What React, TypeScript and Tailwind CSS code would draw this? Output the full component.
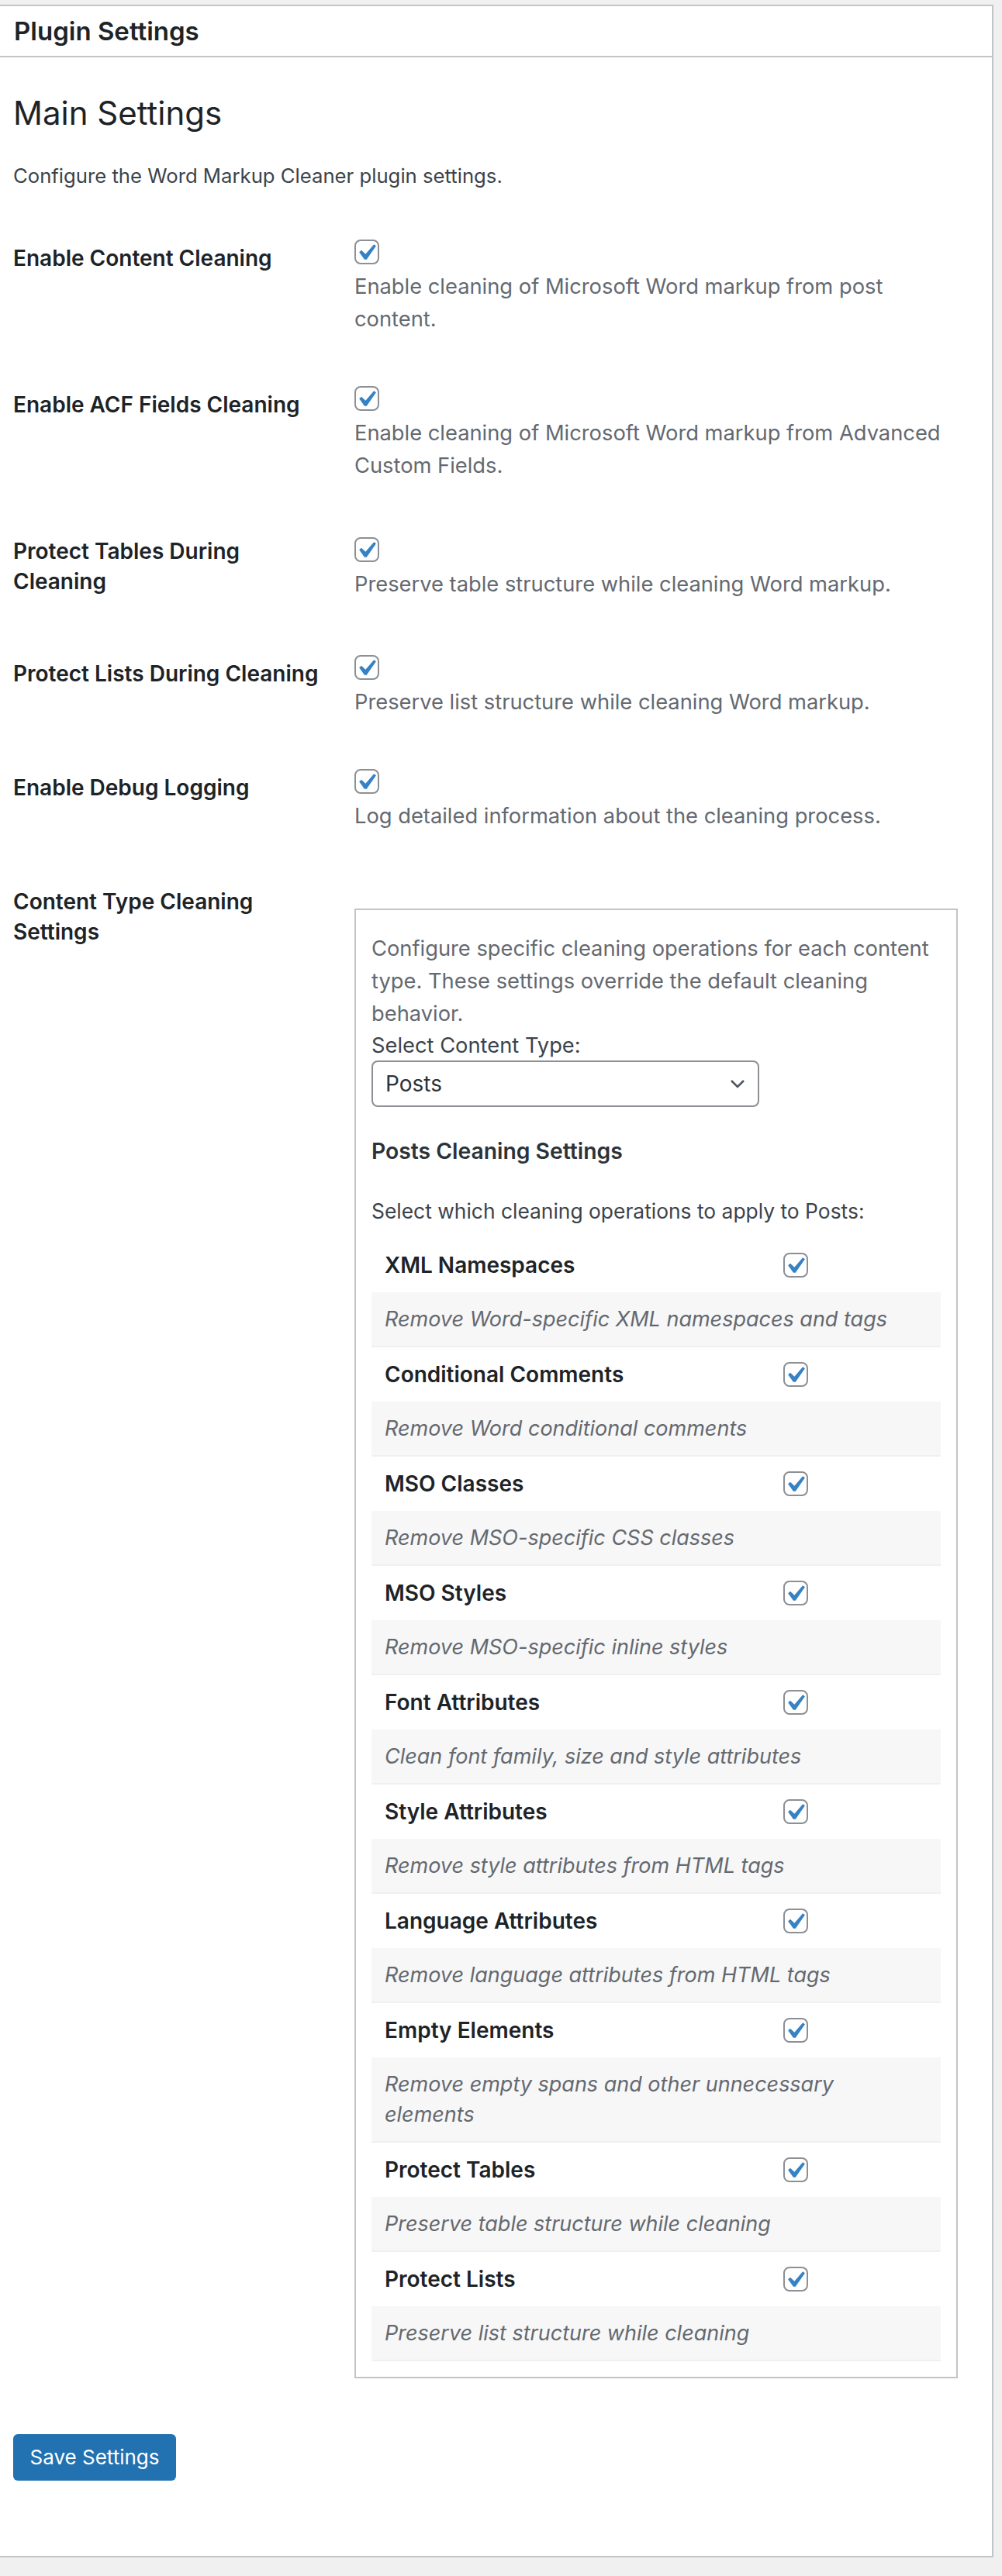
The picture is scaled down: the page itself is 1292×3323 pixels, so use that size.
import React from "react";

const Check = () => (
  <span className="relative inline-block w-[32px] h-[32px] rounded-[8px] border-2 border-[#8c8f94] bg-white align-top">
    <svg className="absolute left-[-8px] top-[-6px] w-[42px] h-[42px]" viewBox="0 0 20 20">
      <path d="M14.83 4.89l1.34.94-5.81 8.38H9.02L5.78 9.67l1.34-1.25 2.57 2.4z" fill="#3582c4" />
    </svg>
  </span>
);

type Row = { label: React.ReactNode; desc: React.ReactNode };

const rows: Row[] = [
  {
    label: "Enable Content Cleaning",
    desc: (
      <>
        Enable cleaning of Microsoft Word markup from post
        <br />
        content.
      </>
    ),
  },
  {
    label: "Enable ACF Fields Cleaning",
    desc: (
      <>
        Enable cleaning of Microsoft Word markup from Advanced
        <br />
        Custom Fields.
      </>
    ),
  },
  {
    label: (
      <>
        Protect Tables During
        <br />
        Cleaning
      </>
    ),
    desc: "Preserve table structure while cleaning Word markup.",
  },
  { label: "Protect Lists During Cleaning", desc: "Preserve list structure while cleaning Word markup." },
  { label: "Enable Debug Logging", desc: "Log detailed information about the cleaning process." },
];

const ops: { name: string; desc: React.ReactNode }[] = [
  { name: "XML Namespaces", desc: "Remove Word-specific XML namespaces and tags" },
  { name: "Conditional Comments", desc: "Remove Word conditional comments" },
  { name: "MSO Classes", desc: "Remove MSO-specific CSS classes" },
  { name: "MSO Styles", desc: "Remove MSO-specific inline styles" },
  { name: "Font Attributes", desc: "Clean font family, size and style attributes" },
  { name: "Style Attributes", desc: "Remove style attributes from HTML tags" },
  { name: "Language Attributes", desc: "Remove language attributes from HTML tags" },
  {
    name: "Empty Elements",
    desc: (
      <>
        Remove empty spans and other unnecessary
        <br />
        elements
      </>
    ),
  },
  { name: "Protect Tables", desc: "Preserve table structure while cleaning" },
  { name: "Protect Lists", desc: "Preserve list structure while cleaning" },
];

export default function App() {
  return (
    <div className="min-h-screen bg-[#f0f0f1] pt-[6px] pb-[30px] font-[family-name:Inter,sans-serif]">
      <div className="w-[1281px] bg-white border-t-2 border-r-2 border-b-2 border-[#c3c4c7]">
        <div className="h-[66px] border-b-2 border-[#c3c4c7] pl-[18px] flex items-center">
          <h2 className="text-[33px] leading-[44px] font-semibold text-[#1d2327]">Plugin Settings</h2>
        </div>
        <div className="pl-[17px] pr-[17px] pb-[97px]">
          <h1 className="mt-[42px] text-[42px] leading-[60px] font-normal text-[#1d2327]">Main Settings</h1>
          <p className="mt-[30px] text-[25.7px] leading-[42px] text-[#3c434a]">
            Configure the Word Markup Cleaner plugin settings.
          </p>

          <div className="mt-[26px]">
            {rows.map((r, i) => (
              <div key={i} className="flex">
                <div className="w-[420px] shrink-0 pt-[40px] pb-[40px] pr-[20px] text-[28px] leading-[39px] font-semibold text-[#1d2327] whitespace-nowrap">
                  {r.label}
                </div>
                <div className="flex-1 self-center py-[30px] pl-[20px] pr-[20px]">
                  <div className="h-[45px] pt-[5px]">
                    <Check />
                  </div>
                  <p className="text-[27.3px] leading-[42px] text-[#646970] whitespace-nowrap">{r.desc}</p>
                </div>
              </div>
            ))}

            <div className="flex">
              <div className="w-[420px] shrink-0 pt-[40px] pb-[40px] pr-[20px] text-[28px] leading-[39px] font-semibold text-[#1d2327] whitespace-nowrap">
                Content Type Cleaning
                <br />
                Settings
              </div>
              <div className="flex-1 pt-[68px] pb-[30px] pl-[20px]">
                <div className="w-[778px] border-2 border-[#c3c4c7] bg-white pt-[29px] pb-[20px] px-[20px]">
                  <p className="text-[27.3px] leading-[42px] text-[#646970] whitespace-nowrap">
                    Configure specific cleaning operations for each content
                    <br />
                    type. These settings override the default cleaning
                    <br />
                    behavior.
                  </p>
                  <div className="text-[27.3px] leading-[39px] text-[#3c434a]">Select Content Type:</div>
                  <div className="relative w-[500px] h-[60px] border-2 border-[#8c8f94] rounded-[8px] bg-white flex items-center pl-[16px]">
                    <span className="text-[28px] leading-[36px] text-[#2c3338]">Posts</span>
                    <svg className="absolute right-[16px] top-[22px] w-[20px] h-[12px]" viewBox="0 0 20 12">
                      <polyline points="2,2 10,10 18,2" fill="none" stroke="#50575e" strokeWidth="2.6" />
                    </svg>
                  </div>
                  <h4 className="mt-[39px] text-[28.3px] leading-[36px] font-semibold text-[#2c3338]">
                    Posts Cleaning Settings
                  </h4>
                  <p className="mt-[38px] text-[26.4px] leading-[42px] text-[#3c434a]">
                    Select which cleaning operations to apply to Posts:
                  </p>
                  <div className="mt-[14px]">
                    {ops.map((o, i) => (
                      <div key={i} className="border-b-2 border-[#f0f0f1]">
                        <div className="flex h-[70px] items-center">
                          <div className="w-[70%] pl-[17px] text-[28px] leading-[40px] font-semibold text-[#1d2327]">
                            {o.name}
                          </div>
                          <div className="w-[30%] pl-[17px] flex items-center">
                            <Check />
                          </div>
                        </div>
                        <div className="bg-[#f7f7f7] py-[15px] pl-[17px] text-[27px] leading-[39px] italic text-[#646970] whitespace-nowrap">
                          {o.desc}
                        </div>
                      </div>
                    ))}
                  </div>
                </div>
              </div>
            </div>
          </div>

          <button className="mt-[42px] w-[210px] h-[60px] rounded-[6px] bg-[#2271b1] text-white text-[26px] leading-[36px] flex items-center justify-center">
            Save Settings
          </button>
        </div>
      </div>
    </div>
  );
}
